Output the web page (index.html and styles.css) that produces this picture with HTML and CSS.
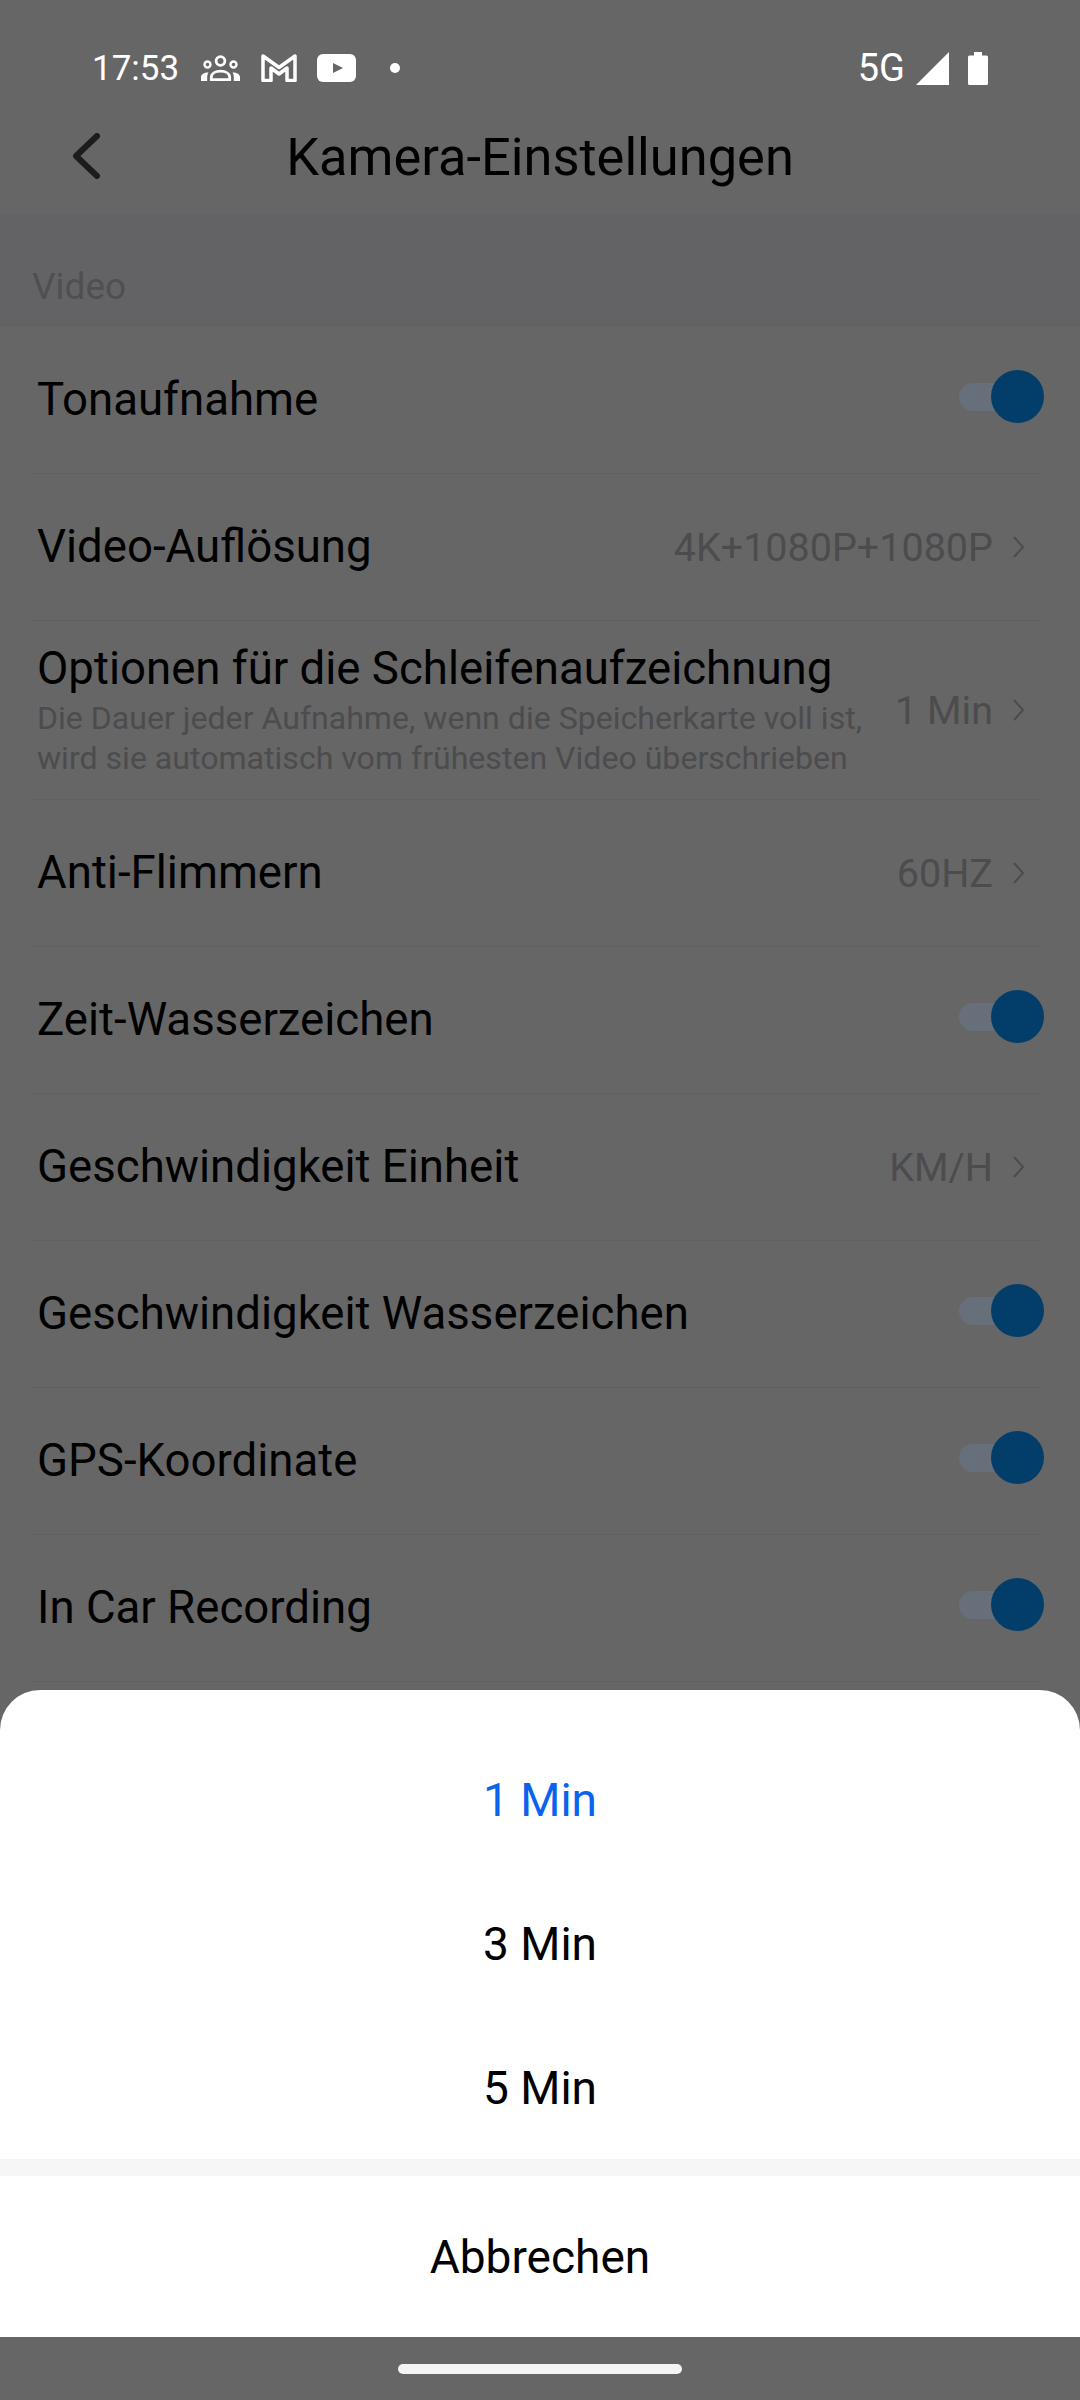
FILE: index.html
```html
<!DOCTYPE html>
<html lang="de">
<head>
    <meta charset="UTF-8">
    <title>Kamera-Einstellungen</title>
    <link rel="stylesheet" href="styles.css">
</head>
<body>
    <div class="page">
        <div class="status-bar">
            <span class="time">17:53</span>
            <svg class="ic-people" width="39" height="26" viewBox="0 0 39 26">
                <circle cx="19.5" cy="6" r="4.4" fill="none" stroke="#fff" stroke-width="2.8"/>
                <circle cx="6.5" cy="9.5" r="3" fill="none" stroke="#fff" stroke-width="2.4"/>
                <circle cx="32.5" cy="9.5" r="3" fill="none" stroke="#fff" stroke-width="2.4"/>
                <path d="M10.3 24.7v-2.2c0-4 4-6.3 9.200-6.300s9.200 2.300 9.200 6.300v2.200z" fill="none" stroke="#fff" stroke-width="2.800"/>
                <path d="M0 26v-3.500c0-3 3-4.900 7.500-4.900-.9 1.300-1.300 3-1.300 4.900V26zM39 26v-3.500c0-3-3-4.900-7.500-4.900.9 1.300 1.300 3 1.300 4.900V26z" fill="#fff"/>
            </svg>
            <svg class="ic-gmail" width="36" height="28" viewBox="0 0 36 28">
                <path d="M2 2l16 11.500L34 2v24.500h-8V14l-8 6-8-6v12.500H2z" fill="none" stroke="#fff" stroke-width="3.500" stroke-linejoin="round"/>
            </svg>
            <svg class="ic-yt" width="39" height="28" viewBox="0 0 39 28">
                <rect width="39" height="28" rx="6" fill="#fff"/>
                <path d="M16 9l10 5-10 5z" fill="#666"/>
            </svg>
            <span class="dot"></span>
            <span class="status-right">
                <span class="net">5G</span>
                <svg class="ic-signal" width="33" height="33" viewBox="0 0 33 33"><path d="M0 33L33 0v33z" fill="#fff"/></svg>
                <svg class="ic-battery" width="20" height="33" viewBox="0 0 20 33"><path d="M6 0h8v3.500h4.500q1.500 0 1.500 1.500v26.500q0 1.500-1.500 1.500h-17Q0 33 0 31.500V5q0-1.500 1.500-1.500H6z" fill="#fff"/></svg>
            </span>
        </div>

        <div class="header">
            <svg class="back" width="27" height="46" viewBox="0 0 27 46"><path d="M24 3L3 23l21 20" fill="none" stroke="#1c1c1c" stroke-width="6" stroke-linecap="round" stroke-linejoin="round"/></svg>
            <div class="title">Kamera-Einstellungen</div>
        </div>

        <div class="section-label">Video</div>

        <div class="row">
            <span class="label">Tonaufnahme</span>
            <span class="toggle"><span class="track"></span><span class="knob"></span></span>
        </div>
        <div class="row">
            <span class="label">Video-Auflösung</span>
            <span class="value">4K+1080P+1080P</span>
            <svg class="chev" width="13" height="24" viewBox="0 0 13 24"><path d="M2 2l9 10-9 10" fill="none" stroke="#4c4c4e" stroke-width="2"/></svg>
        </div>
        <div class="row row-tall">
            <div class="label-wrap">
                <div class="label">Optionen für die Schleifenaufzeichnung</div>
                <div class="desc">Die Dauer jeder Aufnahme, wenn die Speicherkarte voll ist,<br>wird sie automatisch vom frühesten Video überschrieben</div>
            </div>
            <span class="value">1 Min</span>
            <svg class="chev" width="13" height="24" viewBox="0 0 13 24"><path d="M2 2l9 10-9 10" fill="none" stroke="#4c4c4e" stroke-width="2"/></svg>
        </div>
        <div class="row">
            <span class="label">Anti-Flimmern</span>
            <span class="value">60HZ</span>
            <svg class="chev" width="13" height="24" viewBox="0 0 13 24"><path d="M2 2l9 10-9 10" fill="none" stroke="#4c4c4e" stroke-width="2"/></svg>
        </div>
        <div class="row">
            <span class="label">Zeit-Wasserzeichen</span>
            <span class="toggle"><span class="track"></span><span class="knob"></span></span>
        </div>
        <div class="row">
            <span class="label">Geschwindigkeit Einheit</span>
            <span class="value">KM/H</span>
            <svg class="chev" width="13" height="24" viewBox="0 0 13 24"><path d="M2 2l9 10-9 10" fill="none" stroke="#4c4c4e" stroke-width="2"/></svg>
        </div>
        <div class="row">
            <span class="label">Geschwindigkeit Wasserzeichen</span>
            <span class="toggle"><span class="track"></span><span class="knob"></span></span>
        </div>
        <div class="row">
            <span class="label">GPS-Koordinate</span>
            <span class="toggle"><span class="track"></span><span class="knob"></span></span>
        </div>
        <div class="row">
            <span class="label">In Car Recording</span>
            <span class="toggle"><span class="track"></span><span class="knob"></span></span>
        </div>

        <div class="sheet">
            <div class="sheet-body">
                <div class="option selected">1 Min</div>
                <div class="option">3 Min</div>
                <div class="option">5 Min</div>
                <div class="sheet-gap"></div>
                <div class="option cancel">Abbrechen</div>
            </div>
            <div class="nav-bar"><div class="home-bar"></div></div>
        </div>
    </div>
</body>
</html>
```

FILE: styles.css
```css
* {
    box-sizing: border-box;
}

body {
    margin: 0;
    background: #666;
    font-family: Roboto, sans-serif;
    color: #000;
}

.page {
    position: relative;
    height: 2400px;
    overflow: hidden;
    background: #666;
}

.status-bar {
    display: flex;
    align-items: center;
    height: 105px;
    padding: 50px 92px 19px 92px;
    color: #fff;
}

.time {
    font-size: 35px;
    width: 109px;
}

.ic-gmail {
    margin-left: 21px;
}

.ic-yt {
    margin-left: 20px;
}

.dot {
    width: 10px;
    height: 10px;
    margin-left: 34px;
    border-radius: 50%;
    background: #fff;
}

.status-right {
    display: flex;
    align-items: center;
    margin-left: auto;
}

.net {
    font-size: 38px;
}

.ic-signal {
    margin-left: 11px;
}

.ic-battery {
    margin-left: 19px;
}

.header {
    display: grid;
    grid-template-columns: 1fr auto 1fr;
    align-items: center;
    height: 109px;
    padding-bottom: 6px;
}

.back {
    margin: -2px 0 0 73px;
}

.title {
    font-size: 52.4px;
}

.section-label {
    display: flex;
    align-items: flex-end;
    height: 113px;
    padding: 0 0 19px 32px;
    background: #636365;
    color: #4f4f52;
    font-size: 37px;
}

.row {
    display: flex;
    align-items: center;
    height: 147px;
    margin: 0 40px 0 30px;
    padding: 0 15px 0 7px;
    border-bottom: 1px solid #606060;
}

.row-tall {
    height: 179px;
}

.label {
    font-size: 45.6px;
    line-height: 52px;
    margin-right: auto;
}

.label-wrap {
    margin-right: auto;
}

.desc {
    margin-top: 3px;
    font-size: 32.1px;
    line-height: 40px;
    color: #4c4c4e;
}

.value {
    font-size: 39.5px;
    color: #4c4c4e;
}

.chev {
    margin-left: 19px;
}

.toggle {
    position: relative;
    width: 86px;
    height: 53px;
    margin-right: -19px;
    margin-top: -8px;
}

.track {
    display: block;
    width: 58px;
    height: 28px;
    margin: 13px 0 0 1px;
    border-radius: 14px;
    background: #67707a;
}

.knob {
    position: absolute;
    top: 0;
    right: 0;
    width: 53px;
    height: 53px;
    border-radius: 50%;
    background: #033d69;
}

.sheet {
    position: absolute;
    left: 0;
    right: 0;
    bottom: 0;
}

.sheet-body {
    overflow: hidden;
    border-radius: 40px 40px 0 0;
    background: #fff;
    padding-top: 38px;
}

.option {
    height: 144px;
    font-size: 46px;
    line-height: 144px;
    text-align: center;
}

.selected {
    color: #0a63ec;
}

.sheet-gap {
    height: 17px;
    margin-top: -1px;
    background: #f6f6f6;
}

.cancel {
    height: 161px;
    line-height: 162px;
}

.nav-bar {
    display: flex;
    justify-content: center;
    height: 63px;
    padding-top: 27px;
}

.home-bar {
    width: 284px;
    height: 10px;
    border-radius: 5px;
    background: #f4f4f4;
}
```
